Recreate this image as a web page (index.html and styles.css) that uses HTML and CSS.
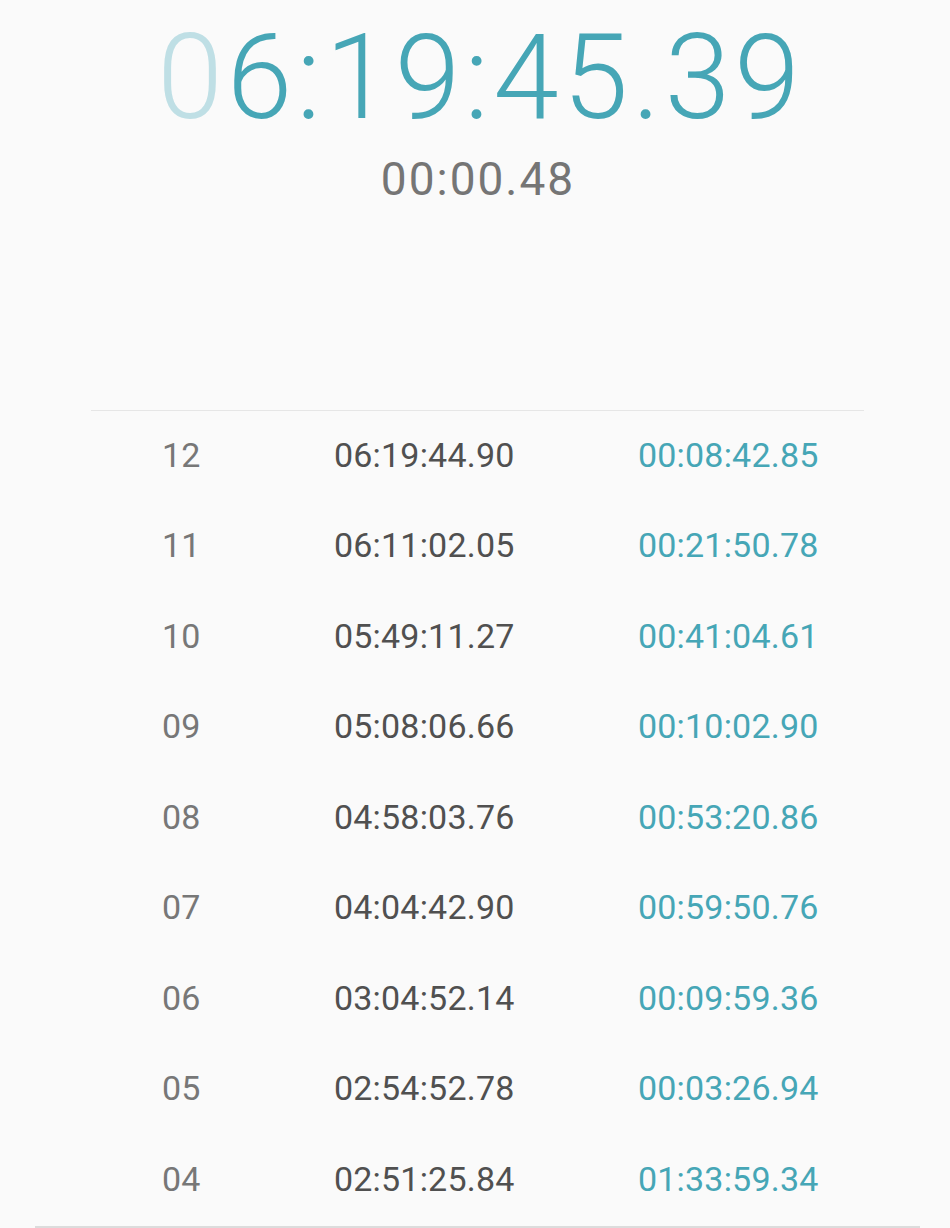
FILE: index.html
```html
<!DOCTYPE html>
<html>
<head>
<meta charset="utf-8">
<link rel="stylesheet" href="styles.css">
</head>
<body>
<div class="screen">
  <header class="clock">
    <div class="main-time"><span class="dim">0</span>6:19:45.39</div>
    <div class="sub-time">00:00.48</div>
  </header>
  <div class="laps">
    <div class="lap"><span class="num">12</span><span class="total">06:19:44.90</span><span class="split">00:08:42.85</span></div>
    <div class="lap"><span class="num">11</span><span class="total">06:11:02.05</span><span class="split">00:21:50.78</span></div>
    <div class="lap"><span class="num">10</span><span class="total">05:49:11.27</span><span class="split">00:41:04.61</span></div>
    <div class="lap"><span class="num">09</span><span class="total">05:08:06.66</span><span class="split">00:10:02.90</span></div>
    <div class="lap"><span class="num">08</span><span class="total">04:58:03.76</span><span class="split">00:53:20.86</span></div>
    <div class="lap"><span class="num">07</span><span class="total">04:04:42.90</span><span class="split">00:59:50.76</span></div>
    <div class="lap"><span class="num">06</span><span class="total">03:04:52.14</span><span class="split">00:09:59.36</span></div>
    <div class="lap"><span class="num">05</span><span class="total">02:54:52.78</span><span class="split">00:03:26.94</span></div>
    <div class="lap"><span class="num">04</span><span class="total">02:51:25.84</span><span class="split">01:33:59.34</span></div>
  </div>
  <div class="bottom-divider"></div>
</div>
</body>
</html>
```

FILE: styles.css
```css
html, body {
  margin: 0;
  padding: 0;
  background: #fafafa;
}
body {
  font-family: Roboto, "Noto Sans", sans-serif;
  height: 1228px;
  overflow: hidden;
}
.screen {
  display: flex;
  flex-direction: column;
}
.clock {
  display: flex;
  flex-direction: column;
  align-items: center;
  height: 410px;
  box-sizing: border-box;
  padding-top: 15.5px;
}
.main-time {
  font-weight: 300;
  font-size: 118px;
  line-height: 124px;
  color: #46a6b6;
  letter-spacing: 4.1px;
  padding-left: 11px;
}
.main-time .dim {
  color: #bfdfe5;
}
.sub-time {
  font-weight: 400;
  font-size: 46px;
  line-height: 54px;
  color: #757575;
  letter-spacing: 2px;
  padding-left: 6px;
  margin-top: 12.5px;
}
.laps {
  margin: 0 86px 0 91px;
  border-top: 1px solid #e6e6e6;
  display: flex;
  flex-direction: column;
}
.lap {
  display: grid;
  grid-template-columns: 172px 304px auto;
  box-sizing: border-box;
  padding: 0 0 3px 71px;
  height: 90.5px;
  align-items: center;
  font-size: 34px;
  letter-spacing: 0.2px;
}
.num { color: #777; }
.total { color: #505050; }
.split { color: #46a6b6; }
.bottom-divider {
  margin: 0 30px 0 35px;
  border-top: 2px solid #dcdcdc;
}
```
